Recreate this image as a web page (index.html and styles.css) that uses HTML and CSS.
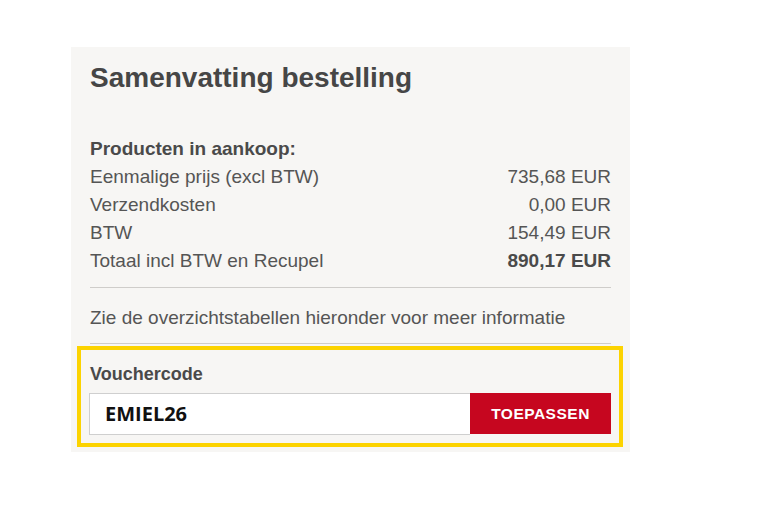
FILE: index.html
```html
<!DOCTYPE html>
<html lang="nl">
<head>
<meta charset="utf-8">
<title>Samenvatting bestelling</title>
<link rel="stylesheet" href="styles.css">
</head>
<body>
<div class="panel">
  <h1 class="title">Samenvatting bestelling</h1>
  <div class="rows">
    <div class="row head">Producten in aankoop:</div>
    <div class="row"><span>Eenmalige prijs (excl BTW)</span><span>735,68 EUR</span></div>
    <div class="row"><span>Verzendkosten</span><span>0,00 EUR</span></div>
    <div class="row"><span>BTW</span><span>154,49 EUR</span></div>
    <div class="row"><span>Totaal incl BTW en Recupel</span><span class="strong">890,17 EUR</span></div>
  </div>
  <div class="rule"></div>
  <p class="info">Zie de overzichtstabellen hieronder voor meer informatie</p>
  <div class="rule rule2"></div>
  <div class="voucher">
    <div class="voucher-label">Vouchercode</div>
    <div class="voucher-form">
      <div class="voucher-input">EMIEL26</div>
      <button class="voucher-btn" type="button">TOEPASSEN</button>
    </div>
  </div>
</div>
</body>
</html>
```
FILE: styles.css
```css
html, body {
  margin: 0;
  padding: 0;
  background: #ffffff;
}
body {
  font-family: "Liberation Sans", Arial, sans-serif;
  color: #555555;
}
.panel {
  margin: 47px 0 0 71px;
  width: 521px;
  padding: 15px 19px 5px 19px;
  background: #f7f6f4;
}
.title {
  margin: 0 0 41px 0;
  font-size: 28px;
  line-height: 32px;
  font-weight: bold;
  color: #464646;
}
.rows {
  display: flex;
  flex-direction: column;
}
.row {
  display: flex;
  justify-content: space-between;
  font-size: 19px;
  line-height: 28px;
}
.row.head {
  font-weight: bold;
  color: #4a4a4a;
}
.strong {
  font-weight: bold;
  color: #4a4a4a;
}
.rule {
  height: 1px;
  background: #cfcdca;
  margin-top: 12px;
}
.info {
  margin: 16px 0 0 0;
  font-size: 19px;
  line-height: 28px;
}
.rule2 {
  margin-top: 11px;
}
.voucher {
  margin: 2px -12px 0 -13px;
  border: 4px solid #fcd300;
  padding: 13px 8px 8px 8px;
}
.voucher-label {
  font-size: 18px;
  line-height: 22px;
  font-weight: bold;
  color: #4a4a4a;
  padding-left: 1px;
}
.voucher-form {
  display: flex;
  margin-top: 8px;
  height: 42px;
}
.voucher-input {
  flex: 1;
  box-sizing: border-box;
  background: #ffffff;
  border: 1px solid #cfcfcf;
  border-right: none;
  padding-left: 15px;
  font-family: "Open Sans", sans-serif;
  font-weight: bold;
  font-size: 20px;
  line-height: 40px;
  color: #111111;
}
.voucher-btn {
  width: 141px;
  height: 41px;
  border: none;
  margin: 0;
  padding: 0;
  background: #c6061f;
  color: #ffffff;
  font-family: "Liberation Sans", Arial, sans-serif;
  font-weight: bold;
  font-size: 15.5px;
  letter-spacing: 0.5px;
}
```
